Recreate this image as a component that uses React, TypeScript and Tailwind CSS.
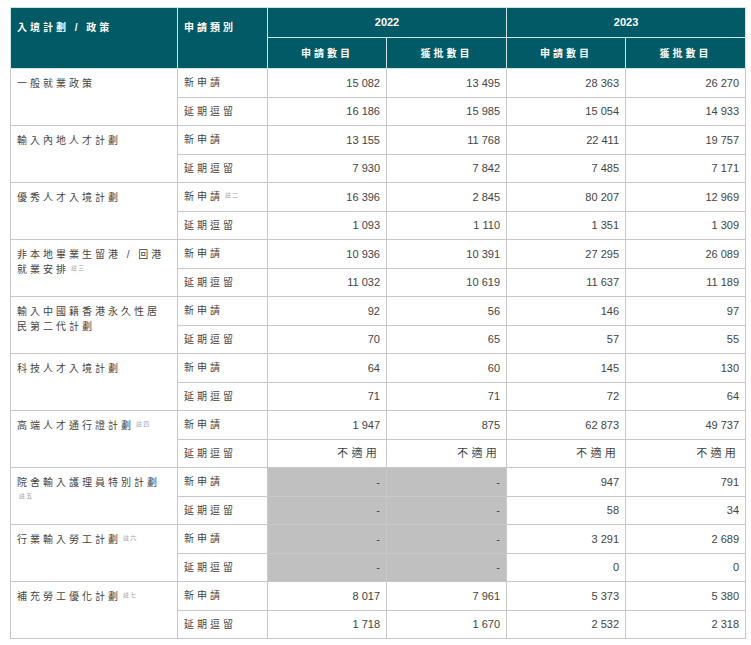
import React from "react";

type Row = { name: React.ReactNode; a: string[]; b: string[]; grey?: boolean; bNote?: boolean };
const N = (t: string) => <sup className="text-[6px] text-gray-400 tracking-[0.2em] ml-[2px] whitespace-nowrap">{t}</sup>;
const rows: Row[] = [
  { name: "一般就業政策", a: ["15 082", "13 495", "28 363", "26 270"], b: ["16 186", "15 985", "15 054", "14 933"] },
  { name: "輸入內地人才計劃", a: ["13 155", "11 768", "22 411", "19 757"], b: ["7 930", "7 842", "7 485", "7 171"] },
  { name: "優秀人才入境計劃", a: ["16 396", "2 845", "80 207", "12 969"], b: ["1 093", "1 110", "1 351", "1 309"], bNote: true },
  { name: <>非本地畢業生留港 / 回港就業安排{N("註三")}</>, a: ["10 936", "10 391", "27 295", "26 089"], b: ["11 032", "10 619", "11 637", "11 189"] },
  { name: "輸入中國籍香港永久性居民第二代計劃", a: ["92", "56", "146", "97"], b: ["70", "65", "57", "55"] },
  { name: "科技人才入境計劃", a: ["64", "60", "145", "130"], b: ["71", "71", "72", "64"] },
  { name: <>高端人才通行證計劃{N("註四")}</>, a: ["1 947", "875", "62 873", "49 737"], b: ["不適用", "不適用", "不適用", "不適用"] },
  { name: <>院舍輸入護理員特別計劃{N("註五")}</>, a: ["-", "-", "947", "791"], b: ["-", "-", "58", "34"], grey: true },
  { name: <>行業輸入勞工計劃{N("註六")}</>, a: ["-", "-", "3 291", "2 689"], b: ["-", "-", "0", "0"], grey: true },
  { name: <>補充勞工優化計劃{N("註七")}</>, a: ["8 017", "7 961", "5 373", "5 380"], b: ["1 718", "1 670", "2 532", "2 318"] },
];

const cell = "border border-[#c8c8c8] h-[28.5px] px-[6px] text-[10px] text-[#444]";
const th = "border border-[#cfe3e6] bg-[#015a65] text-white font-bold text-[10px] tracking-[0.3em]";

export default function App() {
  return (
    <div className="bg-white w-[751px] h-[645px] pt-[7px] pl-[10px]" style={{ fontFamily: '"Liberation Sans","Noto Sans CJK TC",sans-serif' }}>
      <table className="border-collapse table-fixed w-[735px]">
        <colgroup>
          <col className="w-[167px]" /><col className="w-[90px]" /><col className="w-[119px]" /><col className="w-[120px]" /><col className="w-[119px]" /><col className="w-[120px]" />
        </colgroup>
        <thead>
          <tr className="h-[30px]">
            <th rowSpan={2} className={th + " text-left px-[6px] align-top pt-[12px]"}>入境計劃 / 政策</th>
            <th rowSpan={2} className={th + " text-left px-[6px] align-top pt-[12px]"}>申請類別</th>
            <th colSpan={2} className={th + " tracking-normal text-[11px]"}>2022</th>
            <th colSpan={2} className={th + " tracking-normal text-[11px]"}>2023</th>
          </tr>
          <tr className="h-[31px]">
            <th className={th}>申請數目</th><th className={th}>獲批數目</th><th className={th}>申請數目</th><th className={th}>獲批數目</th>
          </tr>
        </thead>
        <tbody>
          {rows.map((r, i) => (
            <React.Fragment key={i}>
              <tr>
                <td rowSpan={2} className={cell + " align-top pt-[7px] tracking-[0.3em] leading-[15px]"}>{r.name}</td>
                <td className={cell + " tracking-[0.3em] whitespace-nowrap"}>新申請{r.bNote ? N("註二") : null}</td>
                {r.a.map((v, j) => (
                  <td key={j} className={cell + " text-right text-[11px] " + (r.grey && j < 2 ? "bg-[#c0c0c0]" : "") + (v === "不適用" ? " tracking-[0.3em] text-[10px]" : "")}>{v}</td>
                ))}
              </tr>
              <tr>
                <td className={cell + " tracking-[0.3em]"}>延期逗留</td>
                {r.b.map((v, j) => (
                  <td key={j} className={cell + " text-right text-[11px] " + (r.grey && j < 2 ? "bg-[#c0c0c0]" : "") + (v === "不適用" ? " tracking-[0.3em] text-[10px]" : "")}>{v}</td>
                ))}
              </tr>
            </React.Fragment>
          ))}
        </tbody>
      </table>
    </div>
  );
}
